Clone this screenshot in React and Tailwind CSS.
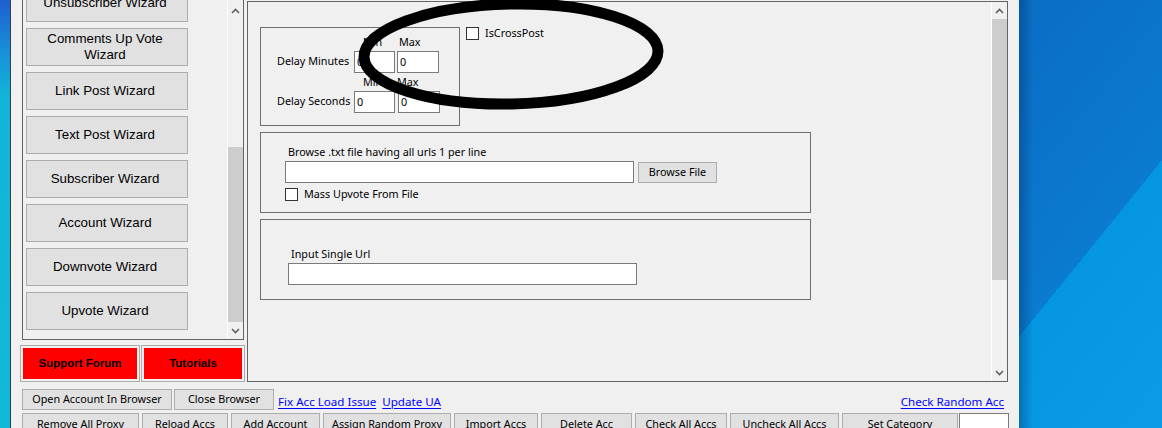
import React from "react";

const uiFont = "font-['Noto_Sans',sans-serif] text-[10.8px]";
const ui = `${uiFont} text-black`;

function Chevron({ down }) {
  return (
    <svg width="9" height="6" viewBox="0 0 9 6">
      <polyline
        points={down ? "1,1 4.5,4.5 8,1" : "1,5 4.5,1.5 8,5"}
        fill="none"
        stroke="#606060"
        strokeWidth="1.6"
      />
    </svg>
  );
}

function WizardBtn({ children }) {
  return (
    <div className="flex h-[38px] w-[162px] shrink-0 items-center justify-center border border-[#adadad] bg-[#e1e1e1] pr-[4px] text-center font-['Liberation_Sans',Arial,sans-serif] text-[13.3px] leading-[16px] text-black">
      {children}
    </div>
  );
}

function Btn({ className, children }) {
  return (
    <div
      className={`flex shrink-0 items-center justify-center whitespace-nowrap border border-[#adadad] bg-[#e1e1e1] leading-none ${ui} ${className}`}
    >
      {children}
    </div>
  );
}

function TextBox({ className, value }) {
  return (
    <div
      className={`flex shrink-0 items-center border border-[#7a7a7a] bg-white pl-[2px] leading-none ${ui} ${className}`}
    >
      {value}
    </div>
  );
}

function CheckBox() {
  return <div className="h-[13px] w-[13px] shrink-0 border border-[#333333] bg-white" />;
}

function RedBtn({ className, children }) {
  return (
    <div className={`flex h-[37px] shrink-0 border border-[#adadad] bg-[#f0f0f0] p-[2px] ${className}`}>
      <div className="flex flex-1 items-center justify-center bg-[#ff0000] font-['Liberation_Sans',Arial,sans-serif] text-[11.5px] font-bold text-black">
        {children}
      </div>
    </div>
  );
}

function Link({ className, children }) {
  return (
    <span
      className={`h-[14px] whitespace-nowrap font-['Noto_Sans',sans-serif] text-[11.6px] leading-[14px] text-[#0000ff] underline underline-offset-[2px] ${className}`}
    >
      {children}
    </span>
  );
}

export default function App() {
  return (
    <div className="relative flex h-[428px] w-[1162px] overflow-hidden">
      {/* desktop strip on the left */}
      <div className="w-[10px] shrink-0 bg-[linear-gradient(180deg,#1d5fd0_0%,#1790d8_12%,#12b3d9_22%,#10bad6_100%)]" />

      {/* application window */}
      <div className="flex w-[1009px] shrink-0 flex-col border-l border-[#3c3c3c] bg-[#f0f0f0]">
        <div className="flex items-start pl-[9px]">
          {/* left column: wizard list + red buttons */}
          <div className="flex w-[225px] shrink-0 flex-col">
            <div className="ml-[2px] flex h-[340px] w-[222px] border-x border-b border-[#646464]">
              <div className="flex-1 overflow-hidden pl-[3px]">
                <div className="-mt-[16px] flex flex-col gap-[6px]">
                  <WizardBtn>Unsubscriber Wizard</WizardBtn>
                  <WizardBtn>
                    Comments Up Vote
                    <br />
                    Wizard
                  </WizardBtn>
                  <WizardBtn>Link Post Wizard</WizardBtn>
                  <WizardBtn>Text Post Wizard</WizardBtn>
                  <WizardBtn>Subscriber Wizard</WizardBtn>
                  <WizardBtn>Account Wizard</WizardBtn>
                  <WizardBtn>Downvote Wizard</WizardBtn>
                  <WizardBtn>Upvote Wizard</WizardBtn>
                </div>
              </div>
              {/* list scrollbar */}
              <div className="flex w-[16px] shrink-0 flex-col border-l border-white bg-[#f0f0f0]">
                <div className="flex h-[20px] justify-center pt-[8px]">
                  <Chevron />
                </div>
                <div className="h-[127px]" />
                <div className="h-[175px] bg-[#cdcdcd]" />
                <div className="flex flex-1 items-center justify-center">
                  <Chevron down />
                </div>
              </div>
            </div>
            <div className="mt-[5px] flex gap-[1px]">
              <RedBtn className="w-[120px]">Support Forum</RedBtn>
              <RedBtn className="w-[104px]">Tutorials</RedBtn>
            </div>
          </div>

          {/* main settings panel */}
          <div className="ml-[2px] mt-[1px] flex h-[381px] w-[761px] shrink-0 border border-[#646464]">
            <div className="flex-1 pl-[12px] pt-[25px]">
              <div className="flex items-start">
                {/* delay group */}
                <div className="flex h-[99px] w-[200px] shrink-0 flex-col border border-[#6e6e6e] pl-[16px] pt-[8px]">
                  <div className={`flex h-[12px] items-center pl-[86px] leading-none ${ui}`}>
                    <span className="w-[36px]">Min</span>
                    <span>Max</span>
                  </div>
                  <div className="mt-[3px] flex h-[22px] items-center">
                    <span className={`w-[77px] whitespace-nowrap pb-[2px] leading-none ${ui}`}>Delay Minutes</span>
                    <TextBox className="h-[22px] w-[41px]" value="0" />
                    <TextBox className="ml-[2px] h-[22px] w-[42px]" value="0" />
                  </div>
                  <div className={`mt-[3px] flex h-[12px] items-center pl-[86px] leading-none ${ui}`}>
                    <span className="w-[34px]">Min</span>
                    <span>Max</span>
                  </div>
                  <div className="mt-[3px] flex h-[22px] items-center">
                    <span className={`w-[77px] whitespace-nowrap pb-[2px] leading-none ${ui}`}>Delay Seconds</span>
                    <TextBox className="h-[22px] w-[41px]" value="0" />
                    <TextBox className="ml-[3px] h-[22px] w-[42px]" value="0" />
                  </div>
                </div>
                <div className="ml-[6px] flex items-center">
                  <CheckBox />
                  <span className={`ml-[6px] leading-none ${ui}`}>IsCrossPost</span>
                </div>
              </div>

              {/* url file group */}
              <div className="mt-[6px] flex h-[81px] w-[551px] flex-col border border-[#6e6e6e] pl-[24px] pt-[12px]">
                <span className={`ml-[3px] h-[14px] leading-[14px] ${ui}`}>
                  Browse .txt file having all urls 1 per line
                </span>
                <div className="mt-[2px] flex items-center">
                  <TextBox className="h-[22px] w-[349px]" value="" />
                  <Btn className="ml-[4px] h-[21px] w-[79px]">Browse File</Btn>
                </div>
                <div className="mt-[5px] flex items-center">
                  <CheckBox />
                  <span className={`ml-[6px] leading-none ${ui}`}>Mass Upvote From File</span>
                </div>
              </div>

              {/* single url group */}
              <div className="mt-[6px] flex h-[81px] w-[551px] flex-col border border-[#6e6e6e] pl-[27px] pt-[27px]">
                <span className={`ml-[3px] h-[14px] leading-[14px] ${ui}`}>Input Single Url</span>
                <TextBox className="mt-[2px] h-[22px] w-[349px]" value="" />
              </div>
            </div>

            {/* panel scrollbar */}
            <div className="flex w-[16px] shrink-0 flex-col border-l border-white bg-[#f0f0f0]">
              <div className="flex h-[17px] items-center justify-center pt-[1px]">
                <Chevron />
              </div>
              <div className="h-[261px] bg-[#cdcdcd]" />
              <div className="flex-1" />
              <div className="flex h-[17px] items-center justify-center">
                <Chevron down />
              </div>
            </div>
          </div>
        </div>

        {/* toolbar row */}
        <div className="mt-[7px] flex h-[21px] items-start pl-[11px] pr-[15px]">
          <Btn className="h-[21px] w-[150px]">Open Account In Browser</Btn>
          <Btn className="ml-[2px] h-[21px] w-[100px]">Close Browser</Btn>
          <Link className="ml-[4px] mt-[6px]">Fix Acc Load Issue</Link>
          <Link className="ml-[6px] mt-[6px]">Update UA</Link>
          <Link className="ml-auto mt-[6px]">Check Random Acc</Link>
        </div>

        {/* account actions row */}
        <div className="mt-[3px] flex h-[23px] gap-[3px] pl-[11px]">
          <Btn className="h-[23px] w-[117px]">Remove All Proxy</Btn>
          <Btn className="h-[23px] w-[86px]">Reload Accs</Btn>
          <Btn className="h-[23px] w-[89px]">Add Account</Btn>
          <Btn className="h-[23px] w-[128px]">Assign Random Proxy</Btn>
          <Btn className="h-[23px] w-[84px]">Import Accs</Btn>
          <Btn className="h-[23px] w-[91px]">Delete Acc</Btn>
          <Btn className="h-[23px] w-[92px]">Check All Accs</Btn>
          <Btn className="h-[23px] w-[109px]">Uncheck All Accs</Btn>
          <Btn className="h-[23px] w-[116px]">Set Category</Btn>
          <div className="-ml-[2px] h-[23px] w-[50px] shrink-0 border border-[#7a7a7a] bg-white" />
        </div>
      </div>

      {/* desktop on the right */}
      <div className="flex-1 bg-[linear-gradient(90deg,rgba(0,40,90,0.35)_0px,rgba(0,40,90,0)_14px),linear-gradient(129deg,#0a6dc4_0%,#0a7bcf_55.7%,#0596e2_55.7%,#0a9ce6_100%)]" />

      {/* hand-drawn highlight ring */}
      <svg
        className="pointer-events-none absolute left-0 top-0"
        width="1162"
        height="428"
        viewBox="0 0 1162 428"
      >
        <ellipse
          cx="511"
          cy="54"
          rx="147"
          ry="50"
          fill="none"
          stroke="#000"
          strokeWidth="11"
          transform="rotate(-1.2 511 54)"
        />
      </svg>
    </div>
  );
}
